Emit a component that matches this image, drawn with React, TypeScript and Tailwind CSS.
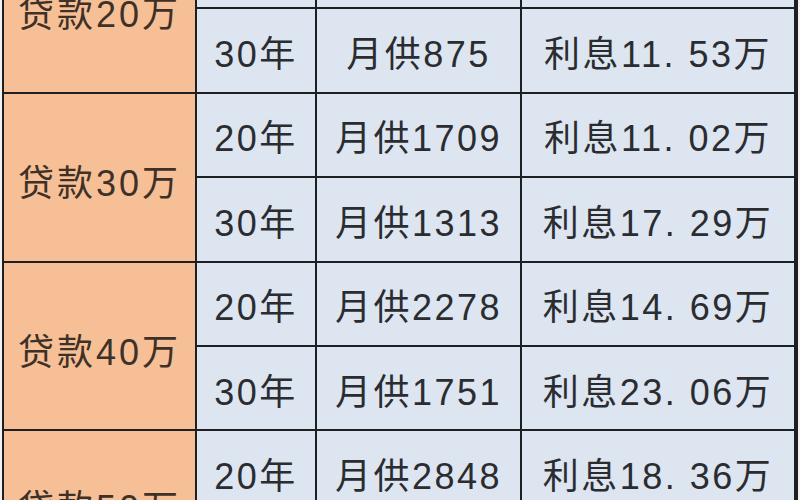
const groups = [
  {
    loan: "贷款20万",
    lift: false,
    rows: [
      { years: "20年", pay: "月供1139", interest: "利息7. 34万" },
      { years: "30年", pay: "月供875", interest: "利息11. 53万" },
    ],
  },
  {
    loan: "贷款30万",
    lift: false,
    rows: [
      { years: "20年", pay: "月供1709", interest: "利息11. 02万" },
      { years: "30年", pay: "月供1313", interest: "利息17. 29万" },
    ],
  },
  {
    loan: "贷款40万",
    lift: false,
    rows: [
      { years: "20年", pay: "月供2278", interest: "利息14. 69万" },
      { years: "30年", pay: "月供1751", interest: "利息23. 06万" },
    ],
  },
  {
    loan: "贷款50万",
    lift: true,
    rows: [
      { years: "20年", pay: "月供2848", interest: "利息18. 36万" },
      { years: "30年", pay: "月供2189", interest: "利息28. 82万" },
    ],
  },
];

const cell =
  "flex items-center justify-center bg-[#dce5f0] pt-[9px] text-[36px] leading-none tracking-[2.5px] text-[#2b2c30]";

export default function App() {
  return (
    <div
      className="h-[500px] w-[800px] overflow-hidden bg-[#f4f1ee]"
      style={{ fontFamily: '"Liberation Sans", "Noto Sans CJK SC", sans-serif' }}
    >
      <div className="-mt-[77px] ml-[2px] grid w-[796px] auto-rows-[82.4px] grid-cols-[191px_118px_203px_272px] gap-[2px] bg-[#1e1f22] p-[2px]">
        {groups.map((g) => (
          <div key={g.loan} className="contents">
            <div
              className={
                g.lift
                  ? "row-span-2 flex items-center justify-center bg-[#f7bf96] pb-[12px] text-[36px] leading-none tracking-[3px] text-[#3d3128]"
                  : "row-span-2 flex items-center justify-center bg-[#f7bf96] pt-[14px] text-[36px] leading-none tracking-[3px] text-[#3d3128]"
              }
            >
              {g.loan}
            </div>
            {g.rows.map((r) => (
              <div key={r.years} className="contents">
                <div className={cell}>{r.years}</div>
                <div className={cell}>{r.pay}</div>
                <div className={cell}>{r.interest}</div>
              </div>
            ))}
          </div>
        ))}
      </div>
    </div>
  );
}
